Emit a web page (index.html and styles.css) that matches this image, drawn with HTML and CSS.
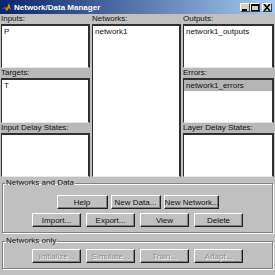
FILE: index.html
```html
<!DOCTYPE html>
<html lang="en">

<head>
    <meta charset="UTF-8">
    <title>Network/Data Manager</title>
    <link rel="stylesheet" href="styles.css">
</head>

<body>
    <div class="window">
        <div class="titlebar">
            <svg class="app-icon" width="10" height="10" viewBox="0 0 10 10">
                <path d="M0 7 L3 5 L5 6 L7 1 L9 8 L10 9 L7 6 L5 9 L3 7 Z" fill="#f08a00" />
                <path d="M0 7 L3 5 L5 6 L3 7 Z" fill="#3050a0" />
            </svg>
            <span class="title">Network/Data Manager</span>
            <div class="caption-buttons">
                <span class="cap-btn"><svg width="8" height="7" viewBox="0 0 8 7"><rect x="1" y="5" width="5" height="2" fill="#000" /></svg></span>
                <span class="cap-btn"><svg width="8" height="7" viewBox="0 0 8 7"><rect x="0.5" y="0.5" width="7" height="6" fill="none" stroke="#000" /><rect x="0" y="0" width="8" height="2" fill="#000" /></svg></span>
                <span class="cap-btn close"><svg width="8" height="7" viewBox="0 0 8 7"><path d="M1 0 L7 7 M7 0 L1 7" stroke="#000" stroke-width="1.6" /></svg></span>
            </div>
        </div>

        <div class="lists">
            <div class="label col1">Inputs:</div>
            <div class="label col2">Networks:</div>
            <div class="label col3">Outputs:</div>

            <div class="listbox col1 r2">
                <div class="item">P</div>
            </div>
            <div class="listbox col2 tall">
                <div class="item">network1</div>
            </div>
            <div class="listbox col3 r2">
                <div class="item">network1_outputs</div>
            </div>

            <div class="label col1 r3">Targets:</div>
            <div class="label col3 r3">Errors:</div>

            <div class="listbox col1 r4">
                <div class="item">T</div>
            </div>
            <div class="listbox col3 r4">
                <div class="item selected">network1_errors</div>
            </div>

            <div class="label col1 r5">Input Delay States:</div>
            <div class="label col3 r5">Layer Delay States:</div>

            <div class="listbox col1 r6"></div>
            <div class="listbox col3 r6"></div>
        </div>

        <div class="panel">
            <fieldset class="group first">
                <legend>Networks and Data</legend>
                <div class="button-row">
                    <button class="btn w51">Help</button>
                    <button class="btn w50">New Data...</button>
                    <button class="btn w55">New Network...</button>
                </div>
                <div class="button-row wide">
                    <button class="btn">Import...</button>
                    <button class="btn">Export...</button>
                    <button class="btn">View</button>
                    <button class="btn">Delete</button>
                </div>
            </fieldset>

            <fieldset class="group second">
                <legend>Networks only</legend>
                <div class="button-row wide">
                    <button class="btn" disabled>Initialize...</button>
                    <button class="btn" disabled>Simulate...</button>
                    <button class="btn" disabled>Train...</button>
                    <button class="btn" disabled>Adapt...</button>
                </div>
            </fieldset>
        </div>
    </div>
</body>

</html>
```

FILE: styles.css
```css
body {
    margin: 0;
    font-family: "Liberation Sans", Arial, sans-serif;
    font-size: 8px;
    background: #c0c0c0;
}

.window {
    width: 275px;
    height: 275px;
    overflow: hidden;
    background: #c0c0c0;
}

/* title bar */

.titlebar {
    height: 14px;
    display: flex;
    align-items: center;
    background: linear-gradient(to right, #0a246a, #a6caf0);
}

.app-icon {
    margin-left: 2px;
    margin-right: 2px;
}

.title {
    color: white;
    font-weight: bold;
    font-size: 8px;
}

.caption-buttons {
    margin-left: auto;
    display: flex;
    margin-right: 3px;
}

.cap-btn {
    width: 10px;
    height: 9px;
    display: flex;
    align-items: center;
    justify-content: center;
    background: #d4d0c8;
    border: 1px solid;
    border-color: #fff #404040 #404040 #fff;
    box-sizing: border-box;
}

.cap-btn.close {
    margin-left: 2px;
}

/* list boxes */

.lists {
    display: grid;
    grid-template-columns: 89px 89px 91px;
    grid-template-rows: 10px 44px 10px 45px 10px 44px;
    column-gap: 2px;
    padding-left: 1px;
}

.col1 { grid-column: 1; }
.col2 { grid-column: 2; }
.col3 { grid-column: 3; }
.r2 { grid-row: 2; }
.r3 { grid-row: 3; }
.r4 { grid-row: 4; }
.r5 { grid-row: 5; }
.r6 { grid-row: 6; }

.label {
    line-height: 10px;
    color: #111;
    white-space: nowrap;
}

.label.r3,
.label.r5 {
    background: #b8b8b8;
}

.listbox {
    background: white;
    border-top: 2px solid #303030;
    border-left: 1px solid #303030;
    border-right: 2px solid #303030;
    border-bottom: 1px solid #e8e8e8;
    box-sizing: border-box;
}

.listbox.tall {
    grid-row: 2 / 7;
}

.item {
    line-height: 11px;
    padding-left: 2px;
    color: #111;
}

.item.selected {
    background: #b4b4b4;
}

/* button groups */

.panel {
    padding: 1px 2px 0 2px;
}

.group {
    margin: 0;
    border: 1px solid #808080;
    box-shadow: 1px 1px 0 #fff, inset 1px 1px 0 #fff;
    padding: 7px 0 5px 0;
}

.group.second {
    margin-top: 3px;
    padding-top: 3px;
}

legend {
    line-height: 10px;
    padding: 0 1px;
    margin-left: 2px;
    color: #111;
}

.button-row {
    display: flex;
    justify-content: center;
    gap: 3px;
}

.button-row.wide {
    gap: 5px;
    margin-top: 4px;
}

.group.second .button-row.wide {
    margin-top: 0;
}

.btn {
    width: 49px;
    height: 14px;
    padding: 0;
    white-space: nowrap;
    font-family: "Liberation Sans", Arial, sans-serif;
    font-size: 8px;
    color: #111;
    background: #c0c0c0;
    border: 1px solid;
    border-color: #fff #202020 #202020 #fff;
    box-shadow: inset -1px -1px 0 #808080;
}

.w51 { width: 51px; }
.w50 { width: 50px; }
.w55 { width: 55px; }

.btn:disabled {
    color: #8c8c8c;
    text-shadow: 1px 1px 0 #fff;
}
```
